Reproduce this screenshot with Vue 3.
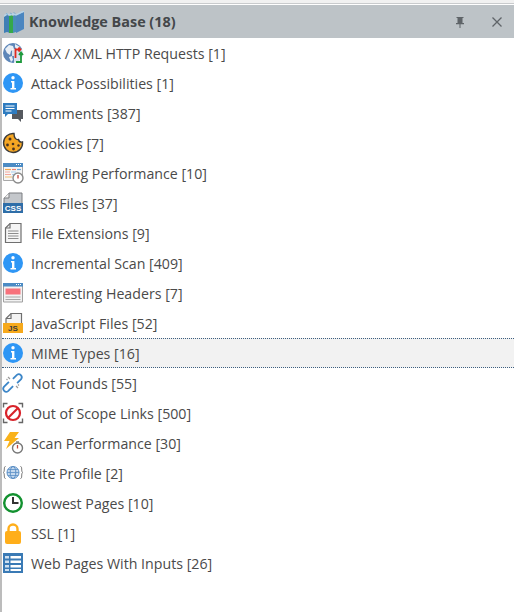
<script setup>
const rows = [
  { label: 'AJAX / XML HTTP Requests [1]', icon: 'ajax' },
  { label: 'Attack Possibilities [1]', icon: 'info' },
  { label: 'Comments [387]', icon: 'comments' },
  { label: 'Cookies [7]', icon: 'cookie' },
  { label: 'Crawling Performance [10]', icon: 'crawl' },
  { label: 'CSS Files [37]', icon: 'css' },
  { label: 'File Extensions [9]', icon: 'file' },
  { label: 'Incremental Scan [409]', icon: 'info' },
  { label: 'Interesting Headers [7]', icon: 'headers' },
  { label: 'JavaScript Files [52]', icon: 'js' },
  { label: 'MIME Types [16]', icon: 'info', selected: true },
  { label: 'Not Founds [55]', icon: 'link' },
  { label: 'Out of Scope Links [500]', icon: 'scope' },
  { label: 'Scan Performance [30]', icon: 'perf' },
  { label: 'Site Profile [2]', icon: 'site' },
  { label: 'Slowest Pages [10]', icon: 'slow' },
  { label: 'SSL [1]', icon: 'ssl' },
  { label: 'Web Pages With Inputs [26]', icon: 'table' },
]
</script>

<template>
  <div class="panel">
    <div class="top-line"></div>
    <header class="title">
      <svg class="book" viewBox="0 0 22 22" width="22" height="22">
        <path d="M0 6l3-2 3 1v17l-3-1-3 1z" fill="#3f7fb5" />
        <path d="M5 5l2-1 2 1v17H5z" fill="#35a84a" />
        <path d="M9 5l3-2v18l-3 1z" fill="#4a8fb8" />
        <path d="M12 4l8-3v17l-8 4z" fill="#4b86c0" />
        <path d="M0 5l3-2 3 1 3-1 3 1 8-4" fill="none" stroke="#b6d3e8" stroke-width="1.500" />
        <path d="M2 2.500l2 1M6 2l2 1M9.500 1.500l2 1" stroke="#7fb0d2" />
      </svg>
      <span class="title-text">Knowledge Base (18)</span>
      <span class="spacer"></span>
      <svg class="pin" viewBox="0 0 12 12" width="12" height="12">
        <path d="M2.500 1h7v1H8.500v5h1.500v1.200H6.500V12h-1V8.200H2V7h1.500V2h-1z" fill="#5f6468" />
      </svg>
      <svg class="close" viewBox="0 0 12 12" width="12" height="12">
        <path d="M1.500 1.500l9 9M10.500 1.500l-9 9" stroke="#5f6468" stroke-width="1.300" fill="none" />
      </svg>
    </header>

    <ul class="list">
      <li v-for="row in rows" :key="row.label" class="row" :class="{ selected: row.selected }">
        <svg class="icon" viewBox="1 0 24 24" width="24" height="24">
          <template v-if="row.icon === 'info'">
            <circle cx="12" cy="12" r="10" fill="#2e96f5" />
            <circle cx="12" cy="6.800" r="1.700" fill="#fff" />
            <path d="M10 10h3.400v7H15v1.500H9.500V17H11v-5.500h-1z" fill="#fff" />
          </template>
          <template v-else-if="row.icon === 'ajax'">
            <circle cx="12" cy="12" r="10" fill="#5d86b8" />
            <path d="M4 8l4-4 4 1 1 3-3 2-1 4-3-2zM14 3l5 3 1 4-4-1-2-3z" fill="#e8eef5" />
            <path d="M8 16l3-1 1 4-2 2z" fill="#e8eef5" />
            <path d="M11 8h11v15H13V15h-2z" fill="#fff" opacity=".75" />
            <path d="M14.500 17V8.500H19M17.500 6.500l2 2-2 2" fill="none" stroke="#e02b20" stroke-width="1.800" />
            <path d="M20 11v10h-5M18 14l2-2.500 2 2.500" fill="none" stroke="#1f9a3c" stroke-width="1.800" />
          </template>
          <template v-else-if="row.icon === 'comments'">
            <path d="M11 9h11v9h-2v3l-3-3h-6z" fill="#55595f" />
            <path d="M2 2h14v11H7l-3 3v-3H2z" fill="#2f7cc0" />
            <path d="M4.500 5h9M4.500 7.500h9M4.500 10h6" stroke="#fff" stroke-width="1.200" />
          </template>
          <template v-else-if="row.icon === 'cookie'">
            <path d="M13 2.500A9.500 9.500 0 1 0 21.500 11c-2 .5-3.500-.5-4-2.500-2.500 .5-4.500-1.500-4.500-6z" fill="#f5a623" stroke="#3a3a3a" stroke-width="1.400" />
            <circle cx="9" cy="8" r="1.500" fill="#4a3320" />
            <circle cx="6.500" cy="14" r="1.400" fill="#4a3320" />
            <circle cx="12" cy="13" r="1.300" fill="#4a3320" />
            <circle cx="12.500" cy="18" r="1.400" fill="#4a3320" />
            <circle cx="17.500" cy="14.500" r="1.200" fill="#4a3320" />
          </template>
          <template v-else-if="row.icon === 'crawl'">
            <path d="M2.500 3.500h19v16h-19z" fill="#f6f6f6" stroke="#a8a8a8" />
            <path d="M2 2h20v4H2z" fill="#4c8bc4" />
            <path d="M15 3.500h1M17 3.500h1M19 3.500h1" stroke="#fff" />
            <path d="M4 8.500h6" stroke="#f3a64a" stroke-width="1.200" />
            <path d="M11 8.500h4" stroke="#f08070" stroke-width="1.200" />
            <path d="M16 8.500h4" stroke="#6aa8dc" stroke-width="1.200" />
            <path d="M4 11h5M4 13.500h6" stroke="#f4a79c" stroke-width="1.200" />
            <path d="M10 11h5M11 13.500h2" stroke="#a5cdee" stroke-width="1.200" />
            <path d="M4 16h7" stroke="#f3c987" stroke-width="1.200" />
            <circle cx="17" cy="17" r="5" fill="#fff" stroke="#8a8a8a" stroke-width="1.400" />
            <path d="M17 14v3.500" fill="none" stroke="#c6463b" stroke-width="1.300" />
          </template>
          <template v-else-if="row.icon === 'css'">
            <path d="M8 2h13v11H3V7z" fill="#c4c7cb" stroke="#7a7d80" />
            <path d="M3 7h5V2" fill="#eee" stroke="#7a7d80" />
            <path d="M2 12h20v10H2z" fill="#2f6ea8" />
            <text x="12" y="20.400" text-anchor="middle" class="tag tag-css">CSS</text>
          </template>
          <template v-else-if="row.icon === 'file'">
            <path d="M9 2.500h11v19H4.500V7z" fill="#f5f5f5" stroke="#6f6f6f" stroke-width="1.200" />
            <path d="M9 2.500V7H4.500" fill="none" stroke="#6f6f6f" stroke-width="1.200" />
            <path d="M7 10h10.500M7 12.500h10.500M7 15h10.500M7 17.500h10.500" stroke="#8c8c8c" stroke-width="1.200" />
          </template>
          <template v-else-if="row.icon === 'headers'">
            <path d="M2.500 3h19v18h-19z" fill="#f2f2f2" stroke="#a0a0a0" />
            <path d="M2 2h20v3.500H2z" fill="#4c8bc4" />
            <path d="M15 3.500h1M17 3.500h1M19 3.500h1" stroke="#fff" />
            <path d="M4.500 7.500h15v6h-15z" fill="#f7727c" />
            <path d="M4.500 16h15M4.500 18.500h15" stroke="#a8a8a8" stroke-width="1.200" />
          </template>
          <template v-else-if="row.icon === 'js'">
            <path d="M10 2.500h10.500V13H5V7.500z" fill="#f3f3f3" stroke="#6f6f6f" stroke-width="1.200" />
            <path d="M10 2.500v5H5" fill="none" stroke="#6f6f6f" stroke-width="1.200" />
            <path d="M2 12h20v10H2z" fill="#f6a91c" />
            <text x="12" y="20.400" text-anchor="middle" class="tag tag-js">JS</text>
          </template>
          <template v-else-if="row.icon === 'link'">
            <path d="M12.100 15.100l-5 5A3 3 0 0 1 2.900 15.900l5-5" fill="none" stroke="#3c86c8" stroke-width="1.800" />
            <path d="M11.900 7.900l4-4A3 3 0 0 1 20.100 8.100l-4 4" fill="none" stroke="#3c86c8" stroke-width="1.800" />
            <path d="M7 6l2 2M5.500 8l1 1M15 15l2 2M17 13.500l1 1" stroke="#9a9a9a" stroke-width="1.200" />
          </template>
          <template v-else-if="row.icon === 'scope'">
            <path d="M2.500 6.500v-4h4M17.500 2.500h4v4M21.500 17.500v4h-4M6.500 21.500h-4v-4" fill="none" stroke="#666" stroke-width="1.400" />
            <circle cx="12" cy="12" r="7" fill="#fff" stroke="#d8232a" stroke-width="2.200" />
            <path d="M7 17L17 7" stroke="#d8232a" stroke-width="2.200" />
          </template>
          <template v-else-if="row.icon === 'perf'">
            <path d="M9 1h9l-4.500 6H18L5 18l3.500-8H3z" fill="#f9b21a" />
            <circle cx="16.500" cy="17" r="5" fill="#fff" stroke="#777" stroke-width="1.400" />
            <path d="M15 11h3" stroke="#777" stroke-width="1.400" />
            <path d="M16.500 14v3.500" fill="none" stroke="#c6463b" stroke-width="1.300" />
          </template>
          <template v-else-if="row.icon === 'site'">
            <circle cx="12" cy="11.500" r="6" fill="#c5d9ee" stroke="#5a8fc6" />
            <ellipse cx="12" cy="11.500" rx="2.800" ry="6" fill="none" stroke="#5a8fc6" />
            <path d="M6 11.500h12M6.800 8.500h10.400M6.800 14.500h10.400" stroke="#5a8fc6" stroke-width=".8" />
            <path d="M4.500 5.500c-2 0-.5 4.500-2 6 1.500 1.500 0 6 2 6M19.500 5.500c2 0 .5 4.500 2 6-1.500 1.500 0 6-2 6" fill="none" stroke="#777" />
          </template>
          <template v-else-if="row.icon === 'slow'">
            <circle cx="12" cy="12" r="8.800" fill="#fff" stroke="#12912f" stroke-width="2.400" />
            <path d="M11 6h2v5h4.500v2H11z" fill="#333" />
          </template>
          <template v-else-if="row.icon === 'ssl'">
            <path d="M7.500 11V8a4.500 4.500 0 0 1 9 0v3" fill="none" stroke="#ffae1a" stroke-width="2.400" />
            <rect x="4" y="10" width="16" height="13" rx="2" fill="#ffae1a" />
          </template>
          <template v-else-if="row.icon === 'table'">
            <path d="M2 2h20v20H2z" fill="#3a7ab5" />
            <path d="M4 5h4v2.500H4zM4 9.500h4V12H4zM4 14h4v2.500H4zM4 18h4v2H4z" fill="#cfe0f0" />
            <path d="M9.500 5H20v2.500H9.500zM9.500 9.500H20V12H9.500zM9.500 14H20v2.500H9.500zM9.500 18H20v2H9.500z" fill="#fff" />
          </template>
        </svg>
        <span class="label">{{ row.label }}</span>
      </li>
    </ul>
  </div>
</template>

<style scoped>
.panel {
  width: 514px;
  height: 612px;
  display: flex;
  flex-direction: column;
  background: #fff;
  font-family: "Open Sans", "Noto Sans", sans-serif;
  overflow: hidden;
}
.top-line {
  flex: none;
  height: 3px;
  margin-bottom: 1px;
  background: #f1f1f1;
  border-bottom: 1px solid #c9cbcd;
}
.title {
  flex: none;
  height: 33px;
  background: #bdc3c7;
  display: flex;
  align-items: center;
  padding: 0 11px 0 4px;
}
.book {
  flex: none;
  margin-right: 3px;
}
.title-text {
  font-size: 14.400px;
  font-weight: 700;
  color: #44474a;
}
.spacer {
  flex: 1;
}
.pin {
  margin-right: 25px;
}
.list {
  flex: 1;
  list-style: none;
  margin: 0;
  padding: 0;
  background: #fff;
  border-left: 2px solid #bcbcbc;
}
.row {
  height: 30px;
  box-sizing: border-box;
  display: flex;
  align-items: center;
  gap: 5px;
  color: #4a4a4a;
  font-size: 14.200px;
}
.row.selected {
  background: #f2f2f2;
  border-top: 1px dotted #3d5f80;
  border-bottom: 1px dotted #3d5f80;
}
.icon {
  flex: none;
}
.tag {
  font-family: "Liberation Sans", sans-serif;
  font-size: 8px;
  font-weight: 700;
}
.tag-css {
  fill: #fff;
}
.tag-js {
  fill: #3a3a3a;
}
</style>

<style>
html, body {
  margin: 0;
  background: #fff;
}
</style>
